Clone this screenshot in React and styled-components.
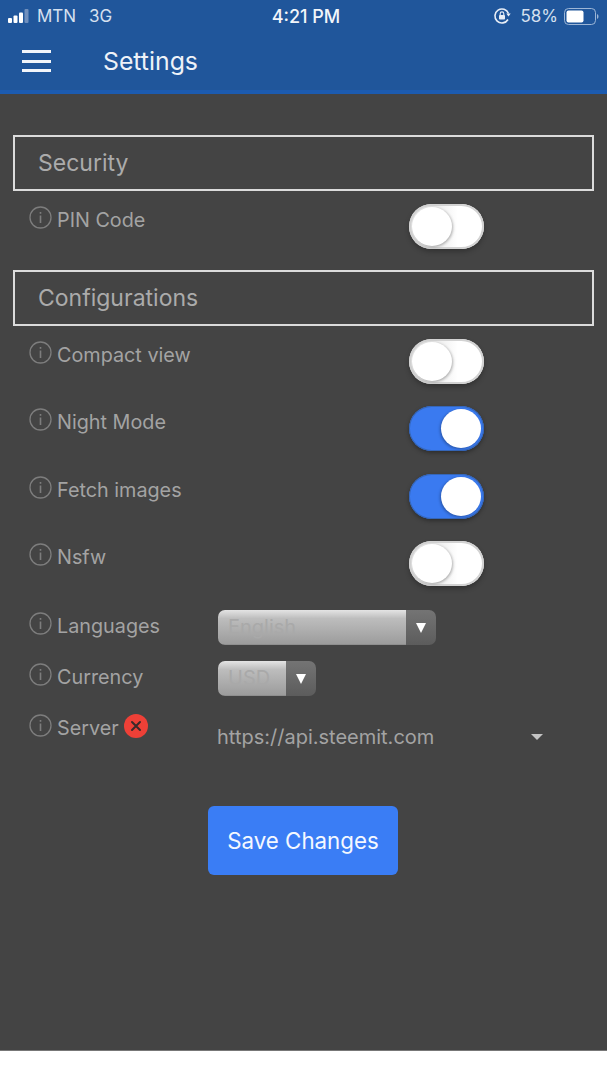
import React from 'react'
import styled, { createGlobalStyle } from 'styled-components'

const Global = createGlobalStyle`
  html, body { margin: 0; padding: 0; background: #fff; }
  body { font-family: Inter, "Liberation Sans", sans-serif; }
`

const Page = styled.div`
  width: 607px;
  height: 1080px;
  background: #fff;
  overflow: hidden;
`
const Header = styled.header`
  height: 90px;
  background: #20569b;
  border-bottom: 4px solid #1c5bb0;
  color: #f2f5fa;
`
const StatusBar = styled.div`
  height: 32px;
  display: grid;
  grid-template-columns: 1fr auto 1fr;
  align-items: center;
  padding: 0 7px 0 8px;
  font-size: 17px;
`
const StatusLeft = styled.div`
  display: flex;
  align-items: center;
  color: #d5e0ef;
`
const Carrier = styled.span`
  margin-left: 4px;
  width: 52px;
`
const Clock = styled.div`
  margin-left: 4px;
  font-size: 18px;
  font-weight: 500;
`
const StatusRight = styled.div`
  display: flex;
  align-items: center;
  justify-content: flex-end;
  color: #d5e0ef;
`
const Percent = styled.span`
  margin: 0 6px 0 9px;
`
const Toolbar = styled.div`
  height: 58px;
  display: flex;
  align-items: center;
  padding-left: 22px;
`
const Burger = styled.div`
  width: 29px;
  height: 22px;
  display: flex;
  flex-direction: column;
  justify-content: space-between;
  span { display: block; height: 3px; background: #f2f5fa; }
`
const Title = styled.div`
  margin-left: 52px;
  font-size: 24.8px;
  color: #eef2f8;
`
const Main = styled.main`
  height: 915px;
  padding: 41px 13px 0;
  background: #444444;
  border-bottom: 1px solid #777777;
  box-sizing: content-box;
`
const SectionBox = styled.div`
  box-sizing: border-box;
  width: 581px;
  height: 56px;
  margin-bottom: ${({ $after }) => $after}px;
  padding-left: 23px;
  border: 2px solid #dcdcdc;
  display: flex;
  align-items: center;
  font-size: 23px;
  color: #ababab;
`
const Rows = styled.div`
  display: flex;
  flex-direction: column;
  gap: ${({ $gap }) => $gap}px;
  margin-bottom: ${({ $after }) => $after || 0}px;
`
const Row = styled.div`
  display: grid;
  grid-template-columns: ${({ $label }) => $label}px 1fr;
  min-height: ${({ $height }) => $height}px;
  padding-left: 16px;
`
const Label = styled.div`
  display: flex;
  align-items: center;
  gap: 5px;
  height: 32px;
  font-size: 19.8px;
  color: #a3a3a3;
`
const InfoIcon = styled.svg`
  width: 23px;
  height: 23px;
  margin-top: -5px;
  flex: none;
`
const ErrorBadge = styled.span`
  width: 24px;
  height: 24px;
  margin-top: -5px;
  border-radius: 50%;
  background: #ee4037;
  display: flex;
  align-items: center;
  justify-content: center;
`
const Track = styled.div`
  box-sizing: border-box;
  width: 75px;
  height: 45px;
  padding: 3px;
  border-radius: 23px;
  display: flex;
  justify-content: ${({ $on }) => ($on ? 'flex-end' : 'flex-start')};
  background: ${({ $on }) => ($on ? '#3a7af0' : 'linear-gradient(90deg,#e8e8e8 30%,#ffffff 65%)')};
  box-shadow: ${({ $on }) =>
    $on
      ? 'inset 0 0 0 1px #3566b8, 0 2px 4px rgba(0,0,0,.35)'
      : 'inset 0 0 0 2px #d2d2d2, 0 3px 5px rgba(0,0,0,.25)'};
`
const Knob = styled.div`
  width: 40px;
  height: 39px;
  border-radius: 50%;
  background: #fff;
  box-shadow: ${({ $on }) => ($on ? '-1px 1px 3px rgba(0,0,0,.3)' : '1px 1px 3px rgba(0,0,0,.3)')};
`
const SelectBox = styled.div`
  display: flex;
  width: ${({ $width }) => $width}px;
  height: 35px;
  border-radius: 7px;
  overflow: hidden;
  font-size: 20px;
  color: #a9a9a9;
`
const SelectValue = styled.div`
  flex: 1;
  display: flex;
  align-items: center;
  padding-left: 10px;
  background: linear-gradient(180deg, #e4e4e4 0%, #bdbdbd 25%, #9c9c9c 100%);
  border-bottom: 1px solid #8f8f8f;
`
const SelectArrow = styled.div`
  width: 30px;
  display: flex;
  align-items: center;
  justify-content: center;
  background: linear-gradient(180deg, #747474 0%, #5c5c5c 100%);
  &::after {
    content: '';
    border-left: 5.5px solid transparent;
    border-right: 5.5px solid transparent;
    border-top: 10px solid #fff;
  }
`
const ServerField = styled.div`
  width: 328px;
  height: 50px;
  display: flex;
  align-items: center;
  justify-content: space-between;
  font-size: 20px;
  color: #a3a3a3;
  &::after {
    content: '';
    margin-right: 2px;
    border-left: 6px solid transparent;
    border-right: 6px solid transparent;
    border-top: 6px solid #c4c4c4;
  }
`
const Footer = styled.div`
  display: flex;
  justify-content: center;
  padding-right: 1px;
`
const SaveButton = styled.button`
  width: 190px;
  height: 69px;
  border: none;
  border-radius: 6px;
  background: #3a7df5;
  color: #f4f8ff;
  font-family: Inter, "Liberation Sans", sans-serif;
  font-size: 22.3px;
`

const Signal = () => (
  <svg width="25" height="14" viewBox="0 0 25 14">
    <rect x="0" y="9" width="4" height="5" rx="1" fill="#fff" />
    <rect x="5.5" y="6.5" width="4" height="7.5" rx="1" fill="#fff" />
    <rect x="11" y="3.5" width="4" height="10.5" rx="1" fill="#fff" />
    <rect x="16.5" y="0" width="4" height="14" rx="1" fill="#6f8fbd" />
  </svg>
)

const RotationLock = () => (
  <svg width="18" height="18" viewBox="0 0 18 18" fill="none">
    <path d="M15 12.5A7 7 0 1 1 15.5 6.5" stroke="#e8eef7" strokeWidth="1.6" />
    <path d="M13.3 6.5h4.4L15.5 9.5z" fill="#e8eef7" />
    <rect x="6" y="8" width="6" height="4.5" rx="0.8" fill="#e8eef7" />
    <path d="M7.2 8V6.7a1.8 1.8 0 0 1 3.6 0V8" stroke="#e8eef7" strokeWidth="1.1" />
  </svg>
)

const Battery = () => (
  <svg width="36" height="17" viewBox="0 0 36 17">
    <rect x="0.5" y="0.5" width="31" height="16" rx="4" fill="none" stroke="#9db6d6" />
    <rect x="2.5" y="2.5" width="17" height="12" rx="2" fill="#fff" />
    <path d="M33 6v5a2.5 2.5 0 0 0 1.5-2.5A2.5 2.5 0 0 0 33 6z" fill="#9db6d6" />
  </svg>
)

const Info = () => (
  <InfoIcon viewBox="0 0 23 23" fill="none">
    <circle cx="11.5" cy="11.5" r="10.5" stroke="#7d7d7d" strokeWidth="1.3" />
    <rect x="10.7" y="9.5" width="1.6" height="7.5" fill="#7d7d7d" />
    <rect x="10.7" y="6" width="1.6" height="1.8" fill="#7d7d7d" />
  </InfoIcon>
)

const Toggle = ({ on }) => (
  <Track $on={on}>
    <Knob $on={on} />
  </Track>
)

const toggleRows = [
  { name: 'Compact view', on: false },
  { name: 'Night Mode', on: true },
  { name: 'Fetch images', on: true },
  { name: 'Nsfw', on: false },
]

const App = () => {
  return (
    <Page>
      <Global />
      <Header>
        <StatusBar>
          <StatusLeft>
            <Signal />
            <Carrier>MTN</Carrier>
            <span>3G</span>
          </StatusLeft>
          <Clock>4:21 PM</Clock>
          <StatusRight>
            <RotationLock />
            <Percent>58%</Percent>
            <Battery />
          </StatusRight>
        </StatusBar>
        <Toolbar>
          <Burger>
            <span />
            <span />
            <span />
          </Burger>
          <Title>Settings</Title>
        </Toolbar>
      </Header>
      <Main>
        <SectionBox $after={13}>Security</SectionBox>
        <Rows $after={21}>
          <Row $label={380} $height={45}>
            <Label>
              <Info />
              PIN Code
            </Label>
            <Toggle on={false} />
          </Row>
        </Rows>
        <SectionBox $after={13}>Configurations</SectionBox>
        <Rows $gap={22.4} $after={24}>
          {toggleRows.map((r) => (
            <Row key={r.name} $label={380} $height={45}>
              <Label>
                <Info />
                {r.name}
              </Label>
              <Toggle on={r.on} />
            </Row>
          ))}
        </Rows>
        <Rows $gap={16} $after={44}>
          <Row $label={189} $height={35}>
            <Label>
              <Info />
              Languages
            </Label>
            <SelectBox $width={218}>
              <SelectValue>English</SelectValue>
              <SelectArrow />
            </SelectBox>
          </Row>
          <Row $label={189} $height={35}>
            <Label>
              <Info />
              Currency
            </Label>
            <SelectBox $width={98}>
              <SelectValue>USD</SelectValue>
              <SelectArrow />
            </SelectBox>
          </Row>
          <Row $label={188} $height={50}>
            <Label>
              <Info />
              Server
              <ErrorBadge>
                <svg width="12" height="12" viewBox="0 0 12 12">
                  <path d="M2 2l8 8M10 2l-8 8" stroke="#3a2a2a" strokeWidth="2" strokeLinecap="round" />
                </svg>
              </ErrorBadge>
            </Label>
            <ServerField>https://api.steemit.com</ServerField>
          </Row>
        </Rows>
        <Footer>
          <SaveButton>Save Changes</SaveButton>
        </Footer>
      </Main>
    </Page>
  )
}

export default App
